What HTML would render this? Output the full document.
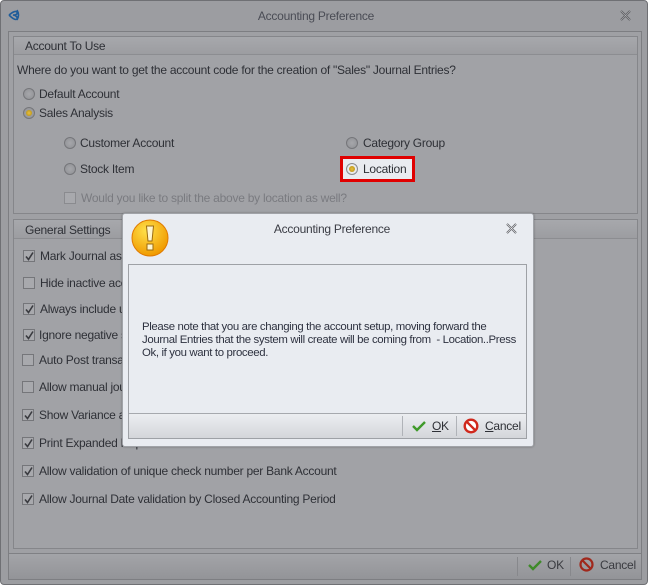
<!DOCTYPE html>
<html><head><meta charset="utf-8">
<style>
*{box-sizing:border-box;margin:0;padding:0}
body{width:648px;height:585px;overflow:hidden;background:#fff;font-family:"Liberation Sans",sans-serif;font-size:12px;color:#2e3036;position:relative}
.win{position:absolute;left:0;top:0;width:648px;height:585px;background:#9c9da1;border:1px solid #6f7074;border-radius:4px}
.abs{position:absolute}
.t{position:absolute;white-space:nowrap;letter-spacing:-0.25px}
.grp{position:absolute;border:1px solid #85868a;background:#a1a2a6}
.gh{position:absolute;left:0;right:0;top:0;height:18px;background:linear-gradient(#a7a8ac,#9c9da1);border-bottom:1px solid #8c8d91}
.rad{position:absolute;width:12px;height:12px;border-radius:50%;border:1px solid #75767a;background:radial-gradient(#a6a7ab,#8f9094)}
.rad.on::after{content:"";position:absolute;left:2px;top:2px;width:6px;height:6px;border-radius:50%;background:radial-gradient(#e8c040,#b08a10)}
.cb{position:absolute;width:12px;height:12px;border:1px solid #75767a;background:#a8a9ad}
.cb svg{position:absolute;left:0;top:0}
</style></head><body>
<div class="win">
  <svg class="abs" style="left:6px;top:7px" width="16" height="14" viewBox="0 0 16 14"><path d="M2 7 Q8 2 10 4 Q11 7 6 7 Q11 8 10 11 Q8 13 2 7 M10 2 Q13 7 10 12" fill="none" stroke="#1f5d9a" stroke-width="1.6"/></svg>
  <div class="t" style="left:0;width:630px;text-align:center;top:8px;color:#4a4c55">Accounting Preference</div>
  <svg class="abs" style="left:619px;top:9px" width="11" height="11" viewBox="0 0 11 11"><path d="M1 1L10 10M10 1L1 10" stroke="#55565a" stroke-width="2"/><path d="M1 1L10 10M10 1L1 10" stroke="#b0b1b5" stroke-width="0.7"/></svg>

  <div class="abs" style="left:7px;top:30px;width:634px;height:549px;border:1px solid #7d7e82;background:#9fa0a4"></div>

  <div class="grp" style="left:12px;top:35px;width:625px;height:178px">
    <div class="gh"></div>
  </div>
  <div class="t" style="left:24px;top:38px">Account To Use</div>
  <div class="t" style="left:16px;top:62px">Where do you want to get the account code for the creation of "Sales" Journal Entries?</div>
  <div class="rad" style="left:22px;top:87px"></div><div class="t" style="left:38px;top:86px">Default Account</div>
  <div class="rad on" style="left:22px;top:106px"></div><div class="t" style="left:38px;top:105px">Sales Analysis</div>
  <div class="rad" style="left:63px;top:136px"></div><div class="t" style="left:79px;top:135px">Customer Account</div>
  <div class="rad" style="left:345px;top:136px"></div><div class="t" style="left:362px;top:135px">Category Group</div>
  <div class="rad" style="left:63px;top:162px"></div><div class="t" style="left:79px;top:161px">Stock Item</div>
  <div class="abs" style="left:339px;top:155px;width:75px;height:26px;border:3px solid #e00000;background:#e9ebf0"></div>
  <div class="rad on" style="left:345px;top:162px;background:radial-gradient(#fff,#d8dade);border-color:#8a8b90"></div>
  <div class="t" style="left:362px;top:161px">Location</div>
  <div class="cb" style="left:63px;top:191px;border-color:#8a8b8f"></div><div class="t" style="left:80px;top:190px;color:#7a7b80">Would you like to split the above by location as well?</div>

  <div class="grp" style="left:12px;top:218px;width:625px;height:330px">
    <div class="gh" style="height:19px"></div>
  </div>
  <div class="t" style="left:24px;top:222px">General Settings</div>

  <div class="cb" style="left:22px;top:249px"><svg width="11" height="11"><path d="M2 5.5L4.5 8.5L9 1.5" fill="none" stroke="#3a3b40" stroke-width="1.6"/></svg></div><div class="t" style="left:39px;top:248px">Mark Journal as Posted</div>
  <div class="cb" style="left:22px;top:276px"></div><div class="t" style="left:39px;top:275px">Hide inactive accounts</div>
  <div class="cb" style="left:22px;top:302px"><svg width="11" height="11"><path d="M2 5.5L4.5 8.5L9 1.5" fill="none" stroke="#3a3b40" stroke-width="1.6"/></svg></div><div class="t" style="left:39px;top:301px">Always include unposted</div>
  <div class="cb" style="left:22px;top:328px"><svg width="11" height="11"><path d="M2 5.5L4.5 8.5L9 1.5" fill="none" stroke="#3a3b40" stroke-width="1.6"/></svg></div><div class="t" style="left:38px;top:327px">Ignore negative stock</div>
  <div class="cb" style="left:21px;top:353px"></div><div class="t" style="left:38px;top:352px">Auto Post transactions</div>
  <div class="cb" style="left:21px;top:380px"></div><div class="t" style="left:38px;top:379px">Allow manual journal</div>
  <div class="cb" style="left:21px;top:408px"><svg width="11" height="11"><path d="M2 5.5L4.5 8.5L9 1.5" fill="none" stroke="#3a3b40" stroke-width="1.6"/></svg></div><div class="t" style="left:38px;top:407px">Show Variance as</div>
  <div class="cb" style="left:21px;top:436px"><svg width="11" height="11"><path d="M2 5.5L4.5 8.5L9 1.5" fill="none" stroke="#3a3b40" stroke-width="1.6"/></svg></div><div class="t" style="left:38px;top:435px">Print Expanded Report View on Financial Center</div>
  <div class="cb" style="left:21px;top:464px"><svg width="11" height="11"><path d="M2 5.5L4.5 8.5L9 1.5" fill="none" stroke="#3a3b40" stroke-width="1.6"/></svg></div><div class="t" style="left:38px;top:463px">Allow validation of unique check number per Bank Account</div>
  <div class="cb" style="left:21px;top:492px"><svg width="11" height="11"><path d="M2 5.5L4.5 8.5L9 1.5" fill="none" stroke="#3a3b40" stroke-width="1.6"/></svg></div><div class="t" style="left:38px;top:491px">Allow Journal Date validation by Closed Accounting Period</div>

  <div class="abs" style="left:8px;top:552px;width:632px;height:26px;background:linear-gradient(#a3a4a8,#939498);border-top:1px solid #7f8084"></div>
  <div class="abs" style="left:516px;top:556px;width:1px;height:19px;background:#87888c"></div>
  <div class="abs" style="left:569px;top:556px;width:1px;height:19px;background:#87888c"></div>
  <svg class="abs" style="left:527px;top:558px" width="14" height="12" viewBox="0 0 14 12"><path d="M1 6L5 10L13 2" fill="none" stroke="#3f8a2a" stroke-width="2.4"/></svg>
  <div class="t" style="left:546px;top:557px;color:#3a3b40">OK</div>
  <svg class="abs" style="left:578px;top:556px" width="15" height="15" viewBox="0 0 15 15"><circle cx="7.5" cy="7.5" r="6" fill="none" stroke="#a0281c" stroke-width="2.2"/><path d="M3.5 3.5L11.5 11.5" stroke="#a0281c" stroke-width="2.2"/></svg>
  <div class="t" style="left:599px;top:557px;color:#3a3b40">Cancel</div>
</div>

<!-- dialog -->
<div class="abs" style="left:122px;top:213px;width:412px;height:234px;background:#e9ecf1;border:1px solid #a0a3a8;border-radius:3px;box-shadow:0 0 2px rgba(0,0,0,.3)"></div>
<svg class="abs" style="left:131px;top:219px" width="38" height="38" viewBox="0 0 38 38"><defs><radialGradient id="g" cx="40%" cy="30%" r="70%"><stop offset="0" stop-color="#ffe14a"/><stop offset="1" stop-color="#f09a00"/></radialGradient></defs><circle cx="19" cy="19" r="18" fill="url(#g)" stroke="#e07a00" stroke-width="1"/><path d="M15.5 7h7l-1.5 15h-4z" fill="#fff6d0" stroke="#9a6a10" stroke-width="1"/><rect x="16" y="25" width="6" height="6" fill="#fff6d0" stroke="#9a6a10" stroke-width="1"/></svg>
<div class="t" style="left:122px;width:420px;text-align:center;top:222px;color:#3a3c44">Accounting Preference</div>
<svg class="abs" style="left:506px;top:223px" width="11" height="11" viewBox="0 0 11 11"><path d="M1 1L10 10M10 1L1 10" stroke="#55565a" stroke-width="2"/><path d="M1 1L10 10M10 1L1 10" stroke="#e8eaee" stroke-width="0.7"/></svg>
<div class="abs" style="left:128px;top:264px;width:399px;height:175px;border:1px solid #9ea1a6;background:#e9ecf1"></div>
<div class="t" style="left:142px;top:321px;line-height:13px;color:#2e3240;font-size:11.4px;letter-spacing:-0.35px">Please note that you are changing the account setup, moving forward the<br>Journal Entries that the system will create will be coming from&nbsp; - Location..Press<br>Ok, if you want to proceed.</div>
<div class="abs" style="left:129px;top:413px;width:397px;height:25px;background:linear-gradient(#eceef1,#d4d6da);border-top:1px solid #a6a9ae"></div>
<div class="abs" style="left:402px;top:416px;width:1px;height:20px;background:#b0b3b8"></div>
<div class="abs" style="left:456px;top:416px;width:1px;height:20px;background:#b0b3b8"></div>
<svg class="abs" style="left:412px;top:420px" width="14" height="12" viewBox="0 0 14 12"><path d="M1 6L5 10L13 2" fill="none" stroke="#3f9a2a" stroke-width="2.4"/></svg>
<div class="t" style="left:432px;top:419px;text-decoration:underline;text-decoration-thickness:1px">O</div><div class="t" style="left:441px;top:419px">K</div>
<svg class="abs" style="left:463px;top:418px" width="16" height="16" viewBox="0 0 16 16"><circle cx="8" cy="8" r="6.3" fill="#fff" stroke="#d0281c" stroke-width="2.4"/><path d="M3.8 3.8L12.2 12.2" stroke="#d0281c" stroke-width="2.4"/></svg>
<div class="t" style="left:485px;top:419px"><u>C</u>ancel</div>
</body></html>
